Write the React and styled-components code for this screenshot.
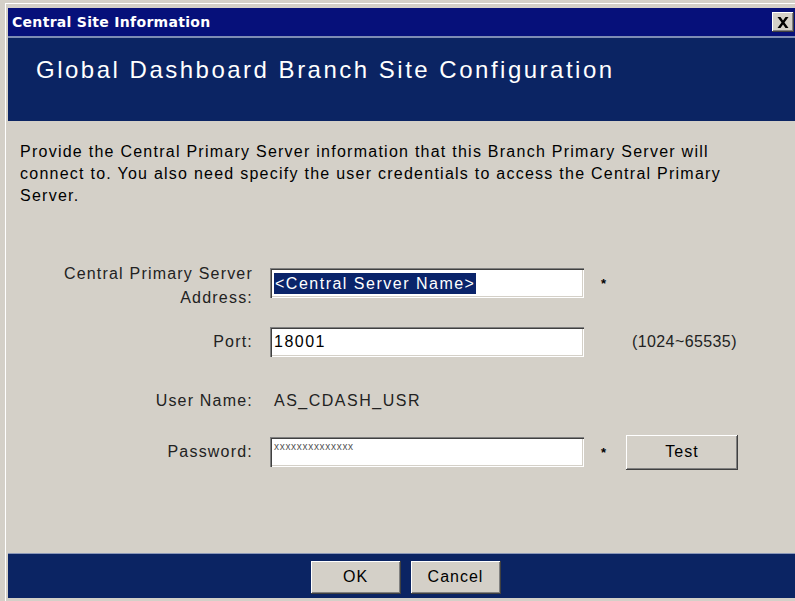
import React from 'react';
import styled, { createGlobalStyle } from 'styled-components';

const GlobalStyle = createGlobalStyle`
  html, body {
    margin: 0;
    padding: 0;
    overflow: hidden;
    background: #d4d0c8;
  }
  body {
    font-family: "Liberation Sans", Arial, sans-serif;
  }
`;

const App = () => {
  return (
    <>
      <GlobalStyle />
      <StyledWindow>
        <StyledTitleBar>
          <span className="caption">Central Site Information</span>
          <StyledCloseButton aria-label="Close">
            <svg width="12" height="11" viewBox="0 0 12 11">
              <path d="M0.5 0h3l2.5 3.6L8.5 0h3l-4 5.5 4 5.5h-3L6 7.4 3.5 11h-3l4-5.5z" fill="#000" />
            </svg>
          </StyledCloseButton>
        </StyledTitleBar>

        <StyledHeader>
          <h1>Global Dashboard Branch Site Configuration</h1>
        </StyledHeader>

        <StyledBody>
          <p className="intro">
            Provide the Central Primary Server information that this Branch Primary Server will
            <br />
            connect to. You also need specify the user credentials to access the Central Primary
            <br />
            Server.
          </p>

          <StyledForm>
            <StyledLabel $offset="5px">
              Central Primary Server
              <br />
              Address:
            </StyledLabel>
            <StyledInput>
              <span className="selected">&lt;Central Server Name&gt;</span>
            </StyledInput>
            <StyledStar>*</StyledStar>
            <span />

            <StyledLabel>Port:</StyledLabel>
            <StyledInput>18001</StyledInput>
            <span />
            <StyledHint>(1024~65535)</StyledHint>

            <StyledLabel>User Name:</StyledLabel>
            <StyledValue>AS_CDASH_USR</StyledValue>
            <span />
            <span />

            <StyledLabel>Password:</StyledLabel>
            <StyledInput $password>xxxxxxxxxxxxxx</StyledInput>
            <StyledStar>*</StyledStar>
            <StyledButton $width="112px" $height="35px">
              Test
            </StyledButton>
          </StyledForm>
        </StyledBody>

        <StyledFooter>
          <StyledButton $width="90px" $height="33px">OK</StyledButton>
          <StyledButton $width="90px" $height="33px">Cancel</StyledButton>
        </StyledFooter>
      </StyledWindow>
    </>
  );
};

export default App;

const StyledWindow = styled.div`
  width: 803px;
  height: 601px;
  box-sizing: border-box;
  padding: 8px 0 3px 8px;
  background: #d4d0c8;
  display: flex;
  flex-direction: column;
  position: relative;

  &::before {
    content: '';
    position: absolute;
    left: 5px;
    top: 3px;
    bottom: 0;
    width: 1px;
    background: #ffffff;
  }
  &::after {
    content: '';
    position: absolute;
    left: 5px;
    right: 0;
    top: 3px;
    height: 1px;
    background: #ffffff;
  }
`;

const StyledTitleBar = styled.div`
  height: 28px;
  flex-shrink: 0;
  background: #06107a;
  display: flex;
  align-items: center;
  justify-content: space-between;
  padding: 0 9px 0 4px;
  border-bottom: 2px solid #7d8cb4;

  .caption {
    font-family: "DejaVu Sans", Verdana, sans-serif;
    font-weight: bold;
    font-size: 14px;
    color: #ffffff;
    letter-spacing: 0.3px;
  }
`;

const StyledCloseButton = styled.button`
  width: 22px;
  height: 20px;
  padding: 0;
  border: none;
  background: #d4d0c8;
  display: flex;
  align-items: center;
  justify-content: center;
  box-shadow: inset -1px -1px #404040, inset 1px 1px #ffffff,
    inset -2px -2px #808080;
`;

const StyledHeader = styled.div`
  height: 83px;
  flex-shrink: 0;
  box-sizing: border-box;
  background: #0b2463;
  padding: 18px 0 0 28px;

  h1 {
    margin: 0;
    font-family: "Liberation Sans", Arial, sans-serif;
    font-weight: normal;
    font-size: 24px;
    line-height: 28px;
    letter-spacing: 2.5px;
    color: #ffffff;
  }
`;

const StyledBody = styled.div`
  flex: 1;
  padding-top: 20px;
  color: #000000;

  .intro {
    margin: 0 0 52px 12px;
    font-size: 16px;
    line-height: 22px;
    letter-spacing: 1.25px;
  }
`;

const StyledForm = styled.div`
  display: grid;
  grid-template-columns: 262px 314px 42px auto;
  grid-template-rows: 48px 70px 48px 54px;
  align-items: center;
  font-size: 16px;
  letter-spacing: 1.2px;
`;

const StyledLabel = styled.div`
  text-align: right;
  padding-right: 17px;
  padding-top: ${({ $offset }) => $offset || '0'};
  line-height: 24px;
  color: #222222;
`;

const StyledInput = styled.div`
  height: 30px;
  box-sizing: border-box;
  background: #ffffff;
  padding: ${({ $password }) => ($password ? '5px 4px' : '0 4px')};
  display: flex;
  align-items: ${({ $password }) => ($password ? 'flex-start' : 'center')};
  font-size: ${({ $password }) => ($password ? '10px' : '16px')};
  line-height: ${({ $password }) => ($password ? '10px' : 'normal')};
  letter-spacing: ${({ $password }) => ($password ? '0.7px' : '1.5px')};
  color: ${({ $password }) => ($password ? '#555555' : '#000000')};
  box-shadow: inset 1px 1px #808080, inset 2px 2px #404040,
    inset -1px -1px #ffffff, inset -2px -2px #d4d0c8;

  .selected {
    background: #0a246a;
    color: #ffffff;
    padding: 0 1px;
    line-height: 21px;
  }
`;

const StyledStar = styled.div`
  padding-left: 17px;
  font-size: 13px;
  font-weight: bold;
`;

const StyledHint = styled.div`
  margin-left: 6px;
  color: #222222;
  letter-spacing: 0.4px;
`;

const StyledValue = styled.div`
  padding-left: 4px;
  color: #222222;
  letter-spacing: 1.5px;
`;

const StyledButton = styled.button`
  width: ${({ $width }) => $width};
  height: ${({ $height }) => $height};
  border: none;
  background: #d4d0c8;
  font-family: "Liberation Sans", Arial, sans-serif;
  font-size: 16px;
  letter-spacing: 1px;
  color: #000000;
  padding: 0;
  box-shadow: inset -1px -1px #404040, inset 1px 1px #ffffff,
    inset -2px -2px #808080, inset 2px 2px #d4d0c8;
`;

const StyledFooter = styled.div`
  height: 45px;
  flex-shrink: 0;
  box-sizing: border-box;
  background: #0b2463;
  border-top: 1px solid #8a97b8;
  display: flex;
  align-items: center;
  justify-content: center;
  gap: 10px;
  padding-top: 2px;
`;
